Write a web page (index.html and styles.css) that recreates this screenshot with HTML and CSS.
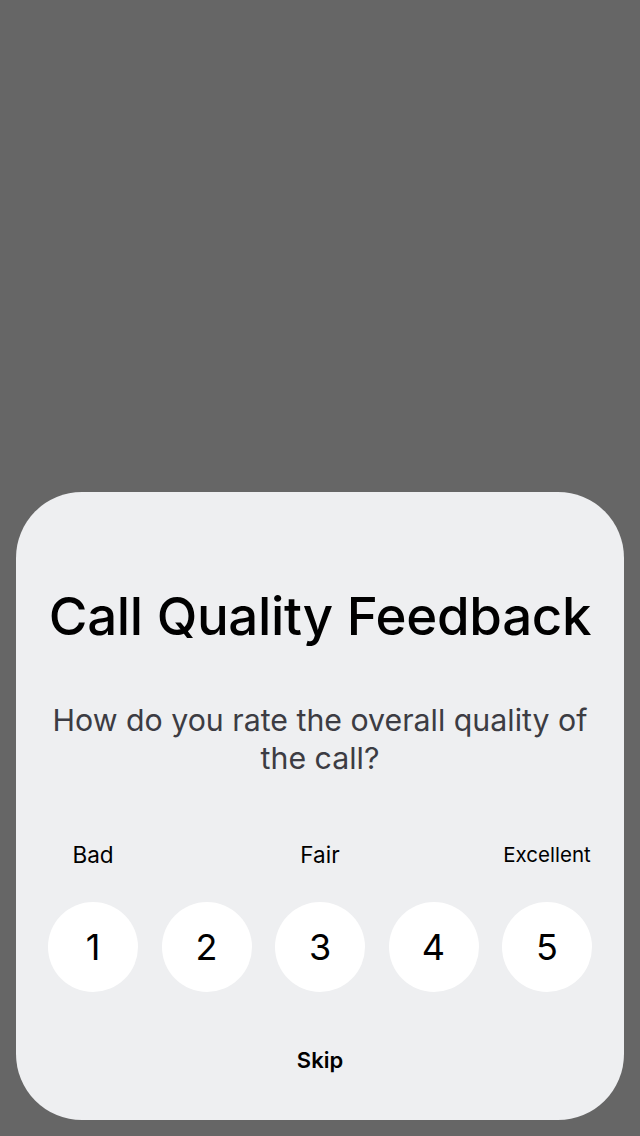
FILE: index.html
```html
<!DOCTYPE html>
<html lang="en">
<head>
<meta charset="utf-8">
<title>Call Quality Feedback</title>
<link rel="stylesheet" href="styles.css">
</head>
<body>
<div class="screen">
  <div class="sheet">
    <h1 class="title">Call Quality Feedback</h1>
    <p class="question">How do you rate the overall quality of the call?</p>
    <div class="labels">
      <span class="label">Bad</span>
      <span class="label">Fair</span>
      <span class="label label-small">Excellent</span>
    </div>
    <div class="ratings">
      <button class="rate">1</button>
      <button class="rate">2</button>
      <button class="rate">3</button>
      <button class="rate">4</button>
      <button class="rate">5</button>
    </div>
    <button class="skip">Skip</button>
  </div>
</div>
</body>
</html>
```

FILE: styles.css
```css
* { box-sizing: border-box; }
html, body {
  margin: 0;
  padding: 0;
  width: 640px;
  height: 1136px;
  background: #666666;
  font-family: Inter, "Noto Sans", sans-serif;
}
.screen {
  width: 640px;
  height: 1136px;
  display: flex;
  flex-direction: column;
  justify-content: flex-end;
  padding: 0 16px 16px;
}
.sheet {
  height: 628px;
  background: #eeeff1;
  border-radius: 66px;
  padding: 92px 24px 0;
  display: flex;
  flex-direction: column;
  align-items: stretch;
}
.title {
  margin: 0;
  font-size: 52.8px;
  font-weight: 500;
  color: #000;
  text-align: center;
  letter-spacing: -0.3px;
  line-height: 64px;
  white-space: nowrap;
}
.question {
  margin: 53px 0 0;
  font-size: 30.3px;
  font-weight: 400;
  color: #3c3c43;
  text-align: center;
  line-height: 38px;
}
.labels {
  margin-top: 64px;
  padding: 0 8px;
  display: flex;
  justify-content: space-between;
  height: 26px;
  align-items: center;
}
.label {
  width: 90px;
  text-align: center;
  font-size: 22.5px;
  color: #000;
  white-space: nowrap;
}
.label-small { font-size: 20.5px; }
.ratings {
  margin-top: 35px;
  padding: 0 8px;
  display: flex;
  justify-content: space-between;
}
.rate {
  width: 90px;
  height: 90px;
  border-radius: 50%;
  border: none;
  background: #ffffff;
  font-family: inherit;
  font-size: 36px;
  font-weight: 400;
  color: #000;
  padding: 0;
}
.skip {
  align-self: center;
  margin-top: 55px;
  border: none;
  background: none;
  font-family: inherit;
  font-size: 22px;
  font-weight: 600;
  color: #000;
  padding: 0;
}
```
